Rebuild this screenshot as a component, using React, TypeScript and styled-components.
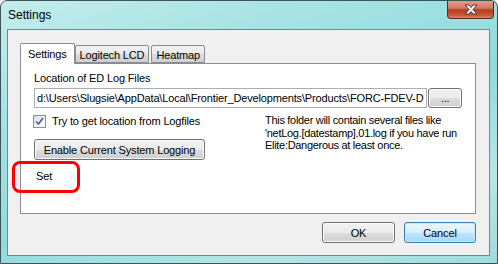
import styled, { createGlobalStyle } from 'styled-components';

const Global = createGlobalStyle`
  html, body {
    margin: 0;
    padding: 0;
    background: #ffffff;
  }
  body {
    font-family: "Liberation Sans", Arial, sans-serif;
    font-size: 11px;
    letter-spacing: -0.15px;
    color: #000;
  }
`;

const Window = styled.div`
  position: relative;
  width: 498px;
  height: 264px;
  box-sizing: border-box;
  border: 1px solid #3b5458;
  border-radius: 7px 7px 0 0;
  background: linear-gradient(160deg, #c4ecec 0%, #a3e2e3 30%, #8fdcdd 55%, #b5e6e6 80%, #9fdcdc 100%);
  display: flex;
  flex-direction: column;
  overflow: hidden;
`;

const TitleBar = styled.div`
  height: 28px;
  display: flex;
  align-items: flex-start;
  justify-content: space-between;
  padding-left: 7px;
`;

const Title = styled.span`
  font-size: 12px;
  letter-spacing: 0;
  margin-top: 7px;
  color: #000;
`;

const CloseBtn = styled.div`
  width: 47px;
  height: 19px;
  margin-right: 3px;
  margin-top: -1px;
  box-sizing: border-box;
  border: 1px solid #5a2a22;
  border-top: none;
  border-radius: 0 0 4px 4px;
  background: linear-gradient(180deg, #e2a08e 0%, #d27b64 45%, #b83b1d 55%, #c9553a 85%, #e08a6e 100%);
  display: flex;
  align-items: center;
  justify-content: center;
`;

const Client = styled.div`
  margin: 0 7px 7px 6px;
  flex: 1;
  background: #f0f0f0;
  border: 1px solid #6a8d92;
  box-sizing: border-box;
  padding: 12px 13px 0 12px;
  display: flex;
  flex-direction: column;
`;

const TabStrip = styled.div`
  display: flex;
  align-items: flex-end;
  height: 21px;
  position: relative;
  z-index: 1;
`;

const Tab = styled.div<{ $active?: boolean }>`
  box-sizing: border-box;
  height: ${(p) => (p.$active ? '21px' : '18px')};
  padding: 0 ${(p) => (p.$active ? '7px' : '4px')};
  margin-right: ${(p) => (p.$active ? '0' : '2px')};
  border: 1px solid #898c95;
  border-bottom: ${(p) => (p.$active ? 'none' : '1px solid #898c95')};
  margin-bottom: ${(p) => (p.$active ? '-1px' : '0')};
  background: ${(p) =>
    p.$active ? '#ffffff' : 'linear-gradient(180deg, #f2f2f2 0%, #ebebeb 50%, #dddddd 51%, #cfcfcf 100%)'};
  display: flex;
  align-items: center;
  padding-top: ${(p) => (p.$active ? '0' : '1px')};
  border-radius: 2px 2px 0 0;
  white-space: nowrap;
`;

const Panel = styled.div`
  height: 151px;
  box-sizing: border-box;
  border: 1px solid #898c95;
  background: #ffffff;
  padding: 8px 13px 0 13px;
  display: flex;
  flex-direction: column;
`;

const FieldLabel = styled.div`
  height: 13px;
  line-height: 13px;
`;

const PathRow = styled.div`
  display: flex;
  gap: 1px;
  margin-top: 3px;
`;

const PathBox = styled.div`
  width: 397px;
  height: 20px;
  box-sizing: border-box;
  border: 1px solid #abadb3;
  background: #fff;
  padding: 0 0 0 2px;
  line-height: 18px;
  white-space: nowrap;
  overflow: hidden;
`;

const Button = styled.div<{ $w: number; $focus?: boolean }>`
  width: ${(p) => p.$w}px;
  height: ${(p) => (p.$w < 40 ? 20 : 21)}px;
  box-sizing: border-box;
  border: 1px solid ${(p) => (p.$focus ? '#3c7fb1' : '#707070')};
  border-radius: 3px;
  background: ${(p) =>
    p.$focus
      ? 'linear-gradient(180deg, #eaf6fd 0%, #d9f0fc 50%, #bee6fd 51%, #a7d9f5 100%)'
      : 'linear-gradient(180deg, #f2f2f2 0%, #ebebeb 50%, #dddddd 51%, #cfcfcf 100%)'};
  box-shadow: inset 0 0 0 1px ${(p) => (p.$focus ? '#c8ebfb' : '#fcfcfc')};
  display: flex;
  align-items: center;
  justify-content: center;
  white-space: nowrap;
  font-size: 11px;
`;

const Columns = styled.div`
  display: flex;
  margin-top: 6px;
`;

const LeftCol = styled.div`
  width: 231px;
  display: flex;
  flex-direction: column;
`;

const CheckRow = styled.div`
  display: flex;
  align-items: center;
  gap: 6px;
  height: 14px;
  margin-left: -1px;
`;

const CheckBox = styled.div`
  width: 13px;
  height: 13px;
  box-sizing: border-box;
  border: 1px solid #8e8f8f;
  background: linear-gradient(135deg, #dcdcdc 0%, #f4f4f4 60%, #ffffff 100%);
  display: flex;
  align-items: center;
  justify-content: center;
`;

const LogButtonWrap = styled.div`
  margin-top: 11px;
`;

const SetLabel = styled.div`
  margin-top: 10px;
  margin-left: 2px;
  line-height: 13px;
`;

const Note = styled.div`
  line-height: 12.5px;
  white-space: nowrap;
  letter-spacing: -0.3px;
`;

const Footer = styled.div`
  display: flex;
  justify-content: flex-end;
  gap: 9px;
  margin-top: 8px;
`;

const Highlight = styled.div`
  position: absolute;
  left: 11px;
  top: 160px;
  width: 68px;
  height: 32px;
  box-sizing: border-box;
  border: 3px solid #ff0000;
  border-radius: 8px;
  pointer-events: none;
`;

export default function App() {
  return (
    <>
      <Global />
      <Window>
        <TitleBar>
          <Title>Settings</Title>
          <CloseBtn>
            <svg width="16" height="11" viewBox="0 0 16 11">
              <path
                d="M2 1 L6 1 L8 3.5 L10 1 L14 1 L10 5.5 L14 10 L10 10 L8 7.5 L6 10 L2 10 L6 5.5 Z"
                fill="#ffffff"
                stroke="#4a3530"
                strokeWidth="1"
                strokeLinejoin="round"
              />
            </svg>
          </CloseBtn>
        </TitleBar>
        <Client>
          <TabStrip>
            <Tab $active>Settings</Tab>
            <Tab>Logitech LCD</Tab>
            <Tab>Heatmap</Tab>
          </TabStrip>
          <Panel>
            <FieldLabel>Location of ED Log Files</FieldLabel>
            <PathRow>
              <PathBox>d:\Users\Slugsie\AppData\Local\Frontier_Developments\Products\FORC-FDEV-D</PathBox>
              <Button $w={34}>...</Button>
            </PathRow>
            <Columns>
              <LeftCol>
                <CheckRow>
                  <CheckBox>
                    <svg width="9" height="9" viewBox="0 0 9 9">
                      <path d="M1 4.5 L3.5 7 L8 1" fill="none" stroke="#4a5f97" strokeWidth="1.6" />
                    </svg>
                  </CheckBox>
                  <span>Try to get location from Logfiles</span>
                </CheckRow>
                <LogButtonWrap>
                  <Button $w={171}>Enable Current System Logging</Button>
                </LogButtonWrap>
                <SetLabel>Set</SetLabel>
              </LeftCol>
              <Note>
                This folder will contain several files like
                <br />
                'netLog.[datestamp].01.log if you have run
                <br />
                Elite:Dangerous at least once.
              </Note>
            </Columns>
          </Panel>
          <Footer>
            <Button $w={73}>OK</Button>
            <Button $w={72} $focus>
              Cancel
            </Button>
          </Footer>
        </Client>
        <Highlight />
      </Window>
    </>
  );
}
